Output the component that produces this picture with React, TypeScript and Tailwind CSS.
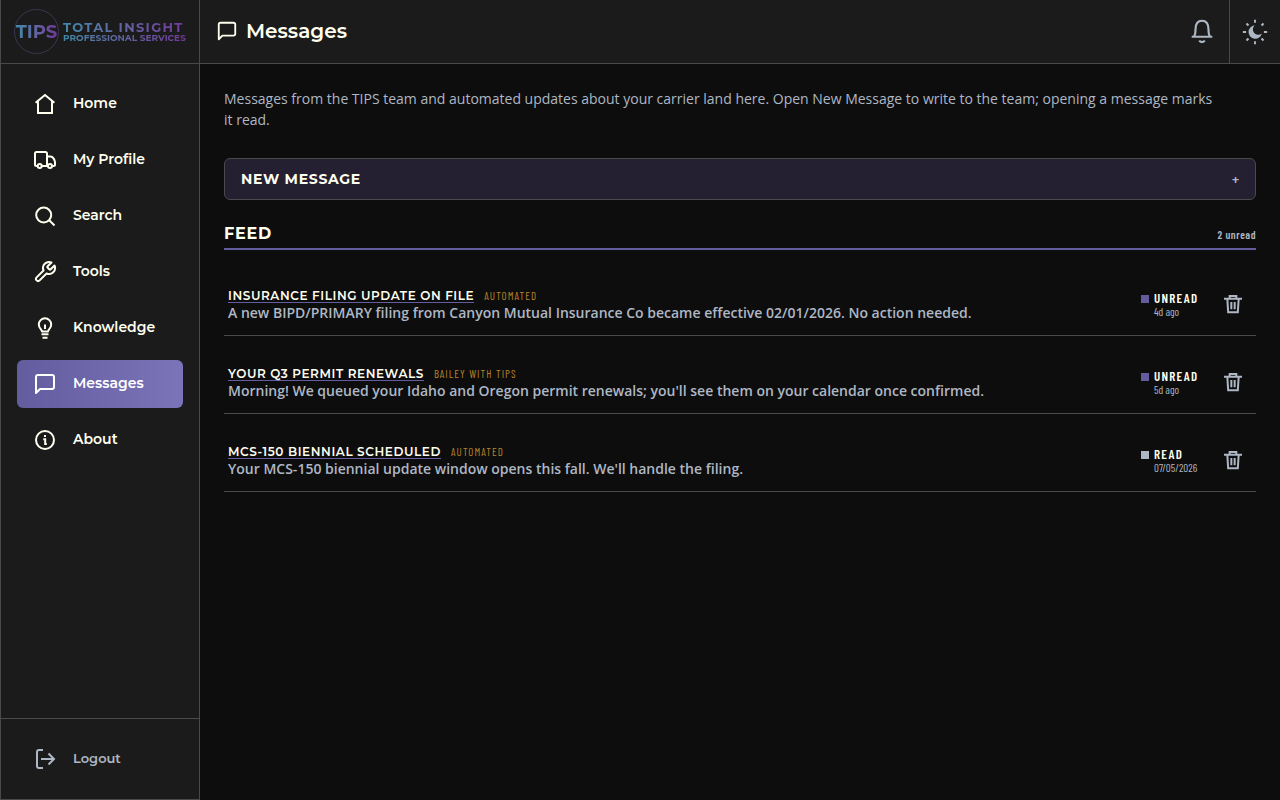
import React from 'react';

const heading = "font-['Montserrat','Inter',sans-serif]";
const condensed = "font-['Barlow_Condensed','Liberation_Sans_Narrow','Roboto_Condensed',sans-serif]";

interface IconProps {
  className?: string;
  strokeWidth?: number;
  children?: React.ReactNode;
}

const Icon = ({ className = 'size-6', strokeWidth = 2, children }: IconProps) => (
  <svg
    className={`shrink-0 ${className}`}
    viewBox="0 0 24 24"
    fill="none"
    stroke="currentColor"
    strokeWidth={strokeWidth}
    aria-hidden="true"
  >
    {children}
  </svg>
);

const messagePath = (
  <path d="M21 15a2 2 0 0 1-2 2H7l-4 4V5a2 2 0 0 1 2-2h14a2 2 0 0 1 2 2z" strokeLinejoin="round" />
);

const navItems = [
  {
    label: 'Home',
    icon: <path d="M2.6 10.8 12 3l9.4 7.8M5 9v12h14V9" />,
  },
  {
    label: 'My Profile',
    icon: (
      <>
        <path d="M4.2 18H3.5A1.5 1.5 0 0 1 2 16.5V5.5A1.5 1.5 0 0 1 3.5 4h9A1.5 1.5 0 0 1 14 5.5V18M9 18h6" />
        <path d="M14 8.5h3.5c2.5 0 4.5 3.5 4.5 6v2A1.5 1.5 0 0 1 20.5 18h-1" />
        <circle cx="6.7" cy="18" r="2" />
        <circle cx="17" cy="18" r="2" />
      </>
    ),
  },
  {
    label: 'Search',
    icon: (
      <>
        <circle cx="10.7" cy="11" r="7.5" />
        <path d="m16 16 5.5 5.5" />
      </>
    ),
  },
  {
    label: 'Tools',
    icon: (
      <path
        d="M14.7 6.3a1 1 0 0 0 0 1.4l1.6 1.6a1 1 0 0 0 1.4 0l3.77-3.77a6 6 0 0 1-7.94 7.94l-6.91 6.91a2.12 2.12 0 0 1-3-3l6.91-6.91a6 6 0 0 1 7.94-7.94l-3.76 3.76z"
        strokeLinejoin="round"
      />
    ),
  },
  {
    label: 'Knowledge',
    icon: (
      <>
        <path d="M9 15.5c0-1.7-3.2-3-3.2-7a6.2 6.2 0 0 1 12.4 0c0 4-3.2 5.3-3.2 7z" strokeLinejoin="round" />
        <path d="M12 8.5V13M8.5 18.3h7M9.5 21.8h5" />
      </>
    ),
  },
  { label: 'Messages', icon: messagePath, active: true },
  {
    label: 'About',
    icon: (
      <>
        <circle cx="12" cy="12" r="9" />
        <path d="M10.3 11.2h1.9v4.8h1.6M11 8h2" />
      </>
    ),
  },
];

const messages = [
  {
    title: 'Insurance filing update on file',
    from: 'Automated',
    body: 'A new BIPD/PRIMARY filing from Canyon Mutual Insurance Co became effective 02/01/2026. No action needed.',
    unread: true,
    date: '4d ago',
  },
  {
    title: 'Your Q3 permit renewals',
    from: 'Bailey with TIPS',
    body: "Morning! We queued your Idaho and Oregon permit renewals; you'll see them on your calendar once confirmed.",
    unread: true,
    date: '5d ago',
  },
  {
    title: 'MCS-150 biennial scheduled',
    from: 'Automated',
    body: "Your MCS-150 biennial update window opens this fall. We'll handle the filing.",
    unread: false,
    date: '07/05/2026',
  },
];

const Logo = () => (
  <a href="#" className={`flex h-16 items-center gap-1 border-b border-[#4a4a4a] pl-[13px] ${heading}`}>
    <span className="flex size-[45px] shrink-0 items-center justify-center rounded-full border border-[#39364f]">
      <span className="bg-linear-to-r from-[#3f88a8] to-[#70389a] bg-clip-text text-lg leading-6 font-bold text-transparent">
        TIPS
      </span>
    </span>
    <span className="flex flex-col bg-linear-to-r from-[#3f88a8] to-[#70389a] bg-clip-text font-bold whitespace-nowrap text-transparent">
      <span className="text-[13px] leading-3 tracking-widest">TOTAL INSIGHT</span>
      <span className="text-[9px] leading-[10px]">PROFESSIONAL SERVICES</span>
    </span>
  </a>
);

const Sidebar = () => (
  <aside className="flex w-[200px] shrink-0 flex-col border border-t-0 border-[#4a4a4a] bg-[#1b1b1b]">
    <Logo />
    <nav className="flex flex-1 flex-col gap-2 p-4">
      {navItems.map((item) => (
        <a
          key={item.label}
          href="#"
          className={`flex h-12 items-center gap-4 rounded-md px-4 text-sm font-semibold ${heading} ${
            item.active ? 'bg-linear-to-r from-[#635c9f] to-[#7b74b8] text-white' : 'text-[#fffff0]'
          }`}
        >
          <Icon>{item.icon}</Icon>
          <span className="pb-0.5">{item.label}</span>
        </a>
      ))}
    </nav>
    <div className="border-t border-[#4a4a4a] p-4">
      <button className={`flex h-12 w-full items-center gap-4 px-4 text-[13px] font-semibold text-[#aeb7c4] ${heading}`}>
        <Icon>
          <path d="M10 3H6a2 2 0 0 0-2 2v14a2 2 0 0 0 2 2h4M8 12h13M15.5 6.5 21 12l-5.5 5.5" />
        </Icon>
        <span>Logout</span>
      </button>
    </div>
  </aside>
);

const Header = () => (
  <header className="flex h-16 items-center border-b border-[#4a4a4a] bg-[#1b1b1b] pb-0.5 pl-4 text-[#fffff0]">
    <Icon className="size-[22px]">{messagePath}</Icon>
    <h1 className={`ml-2 flex-1 text-xl font-semibold ${heading}`}>Messages</h1>
    <button aria-label="Notifications" className="flex h-full w-[54px] items-center justify-center text-[#aeb7c4]">
      <Icon className="size-[26px]">
        <path d="M2.5 17.3h19M4.5 17c1.3-1.3 1.5-3.2 1.5-6.5C6 5.3 8 2.5 12 2.5s6 2.8 6 8c0 3.3.2 5.2 1.5 6.5" />
        <path d="M9.5 20.8c.5 1 1.4 1.4 2.5 1.4s2-.4 2.5-1.4" />
      </Icon>
    </button>
    <button
      aria-label="Toggle theme"
      className="-mb-0.5 flex w-[51px] items-center justify-center self-stretch border-l border-[#4a4a4a] text-[#aeb7c4]"
    >
      <Icon className="size-[26px]" strokeWidth={1.8}>
        <path d="M11.7 5.8a6.2 6.2 0 1 0 6.6 7.5 4.9 4.9 0 0 1-6.6-7.5z" fill="currentColor" stroke="none" />
        <path d="M12 .8v2.7M12 20.5v2.7M.8 12h3M20.2 12h3M4.1 4.1 6 6M18 18l1.9 1.9M4.1 19.9 6 18M18 6l1.9-1.9" />
      </Icon>
    </button>
  </header>
);

const App: React.FC = () => {
  return (
    <div className="flex min-h-screen bg-[#0d0d0d] font-['Open_Sans','Noto_Sans',sans-serif] text-[#aeb7c4]">
      <Sidebar />
      <div className="flex min-w-0 flex-1 flex-col">
        <Header />
        <main className="p-6">
          <p className="pr-10 text-sm leading-[21px] font-medium">
            Messages from the TIPS team and automated updates about your carrier land here. Open New Message to write to
            the team; opening a message marks it read.
          </p>

          <button className="mt-7 flex h-[42px] w-full items-center justify-between rounded-md border border-[#4a4a4a] bg-[#241f31] px-4">
            <span className={`text-sm font-bold tracking-wider text-[#fffff0] uppercase ${heading}`}>New Message</span>
            <span className={`text-base font-semibold ${condensed}`}>+</span>
          </button>

          {/* Feed */}
          <section>
            <div className="mt-6 flex items-end justify-between border-b-2 border-[#635c9f]">
              <h2 className={`pb-1 text-base leading-5 font-bold tracking-wider text-[#fffff0] uppercase ${heading}`}>Feed</h2>
              <span className={`pb-1 text-[11px] leading-[18px] font-semibold tracking-wider ${condensed}`}>2 unread</span>
            </div>

            <ul className="mt-2">
              {messages.map((message) => (
                <li key={message.title} className="flex h-[78px] items-end border-b border-[#4a4a4a] pr-[5px] pb-[13px] pl-1">
                  <div className="min-w-0 flex-1">
                    <div className="flex items-end gap-[10px]">
                      <a
                        href="#"
                        className={`border-b border-[#635c9f] text-xs leading-3 font-semibold tracking-wider text-[#fffff0] uppercase ${heading}`}
                      >
                        {message.title}
                      </a>
                      <span className={`text-[11px] leading-[14px] tracking-widest text-[#b8832a] uppercase ${condensed}`}>
                        {message.from}
                      </span>
                    </div>
                    <p className="text-sm leading-[19px] font-semibold">{message.body}</p>
                  </div>
                  <div className="flex w-[58px] shrink-0 justify-center gap-[5px] pb-[3px]">
                    <span className={`mt-1 size-2 shrink-0 ${message.unread ? 'bg-[#635c9f]' : 'bg-[#aeb7c4]'}`} />
                    <div className={`flex w-[45px] flex-col ${condensed}`}>
                      <span className="text-[13px] leading-[14px] font-semibold tracking-widest text-[#fffff0]">
                        {message.unread ? 'UNREAD' : 'READ'}
                      </span>
                      <span className="text-[11px] leading-[14px] whitespace-nowrap">{message.date}</span>
                    </div>
                  </div>
                  <button aria-label="Delete message" className="ml-4 flex size-9 shrink-0 items-center justify-center">
                    <Icon className="size-5" strokeWidth={2.4}>
                      <path d="M1.2 5.6h21.6M8 5V2.4h8V5M5.2 6l1 15.8h11.6l1-15.8M10 9.6v8.6M14 9.6v8.6" />
                    </Icon>
                  </button>
                </li>
              ))}
            </ul>
          </section>
        </main>
      </div>
    </div>
  );
};

export default App;
